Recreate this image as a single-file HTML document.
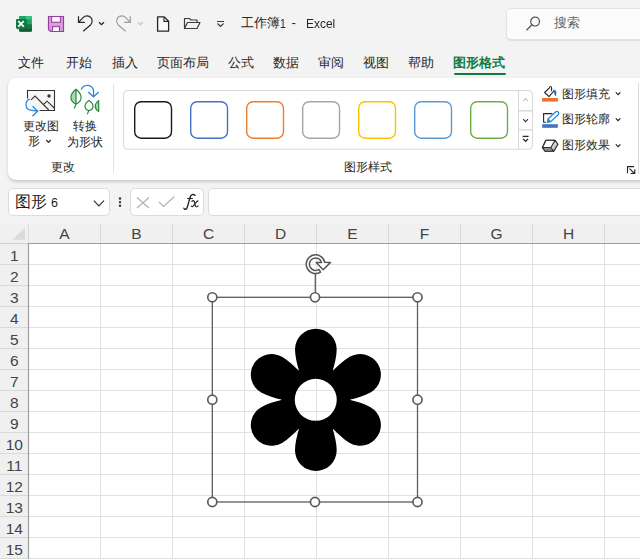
<!DOCTYPE html>
<html><head><meta charset="utf-8">
<style>
*{margin:0;padding:0;box-sizing:border-box}
html,body{width:640px;height:559px;overflow:hidden;background:#f3f3f3;font-family:"Liberation Sans",sans-serif;color:#262626;position:relative}
.a{position:absolute;white-space:nowrap;line-height:1}
.tab{font-size:13px;top:56px;color:#262626}
.card{position:absolute;left:8px;top:77.5px;width:650px;height:102.5px;background:#fff;border-radius:8px;box-shadow:0 1.5px 3px rgba(0,0,0,.16)}
.box{position:absolute;background:#fff;border:1px solid #dcdcdc;border-radius:5px}
.sw{position:absolute;top:101px;width:38px;height:37.5px;border:1.5px solid;border-radius:7px}
.rh{position:absolute;left:0;width:28.5px;text-align:center;font-size:15.5px;color:#444}
.ch{position:absolute;top:226px;width:72px;text-align:center;font-size:15.5px;color:#444}
</style></head><body>

<!-- title bar icons -->
<svg class="a" style="left:0;top:0" width="640" height="46" viewBox="0 0 640 46">
  <!-- excel icon -->
  <rect x="19.2" y="16" width="12.7" height="15.7" rx="1" fill="#21a366"/>
  <rect x="19.2" y="16" width="12.7" height="3.4" rx="1" fill="#21a366"/>
  <rect x="25.8" y="16" width="6.1" height="3.4" fill="#33c481"/>
  <rect x="19.2" y="24.3" width="12.7" height="4.1" fill="#107c41"/>
  <path d="M19.2 28.3 H31.9 V30.7 Q31.9 31.7 30.9 31.7 H20.2 Q19.2 31.7 19.2 30.7 Z" fill="#185c37"/>
  <rect x="17" y="20" width="10.2" height="9.3" fill="#0a5a2c" opacity=".5"/>
  <rect x="16" y="19" width="10.7" height="9.85" rx="1" fill="#107c41"/>
  <path d="M18.3 21.1 L23.7 26.6 M23.7 21.1 L18.3 26.6" stroke="#fff" stroke-width="1.7"/>
  <!-- save icon -->
  <path d="M48.5 16.5 H63.5 V31.5 H50.5 L48.5 29.5 Z" fill="#d89ddb" stroke="#9b3ea2" stroke-width="1.2"/>
  <rect x="51.6" y="16.5" width="8.8" height="5.7" fill="#fff" stroke="#9b3ea2" stroke-width="1.1"/>
  <rect x="52.5" y="26.6" width="7" height="4.9" fill="#fff" stroke="#9b3ea2" stroke-width="1.1"/>
  <!-- undo -->
  <path d="M78.5 16.3 V22.3 H84.8 M78.5 22.3 L83.3 17.4 C85.3 15.4 89 15.4 91 17.6 C92.7 19.6 92.5 23 90.5 25 L83.2 31.3" fill="none" stroke="#262626" stroke-width="1.2"/>
  <path d="M99 22.3 L101.5 24.7 L104 22.3" fill="none" stroke="#262626" stroke-width="1.3"/>
  <!-- redo -->
  <path d="M130.3 16.3 V22.3 H124 M130.3 22.3 L125.5 17.4 C123.5 15.4 119.8 15.4 117.8 17.6 C116.1 19.6 116.3 23 118.3 25 L125.6 31.3" fill="none" stroke="#9c9c9c" stroke-width="1.2"/>
  <path d="M137.8 22.3 L140.4 24.7 L143 22.3" fill="none" stroke="#c4c4c4" stroke-width="1.2"/>
  <!-- new doc -->
  <path d="M157.6 16.9 H164.2 L168.6 21.3 V31.2 H157.6 Z" fill="#fafafa" stroke="#262626" stroke-width="1.3" stroke-linejoin="round"/><path d="M164 17 V21.4 H168.5" fill="none" stroke="#262626" stroke-width="1.1"/>
  <!-- open folder -->
  <path d="M184.5 28.5 V18.5 H189.5 L191 20 H197 V22.5 M184.5 28.5 L187.5 22.5 H200 L197 28.5 Z" fill="none" stroke="#3b3b3b" stroke-width="1.2" stroke-linejoin="round"/>
  <!-- customize -->
  <path d="M217 21.5 H224 M217.5 23.5 L220.5 26.5 L223.5 23.5" fill="none" stroke="#3b3b3b" stroke-width="1.2"/>
</svg>
<div class="a" style="left:241px;top:17px;font-size:12.5px;color:#262626">工作簿</div>
<div class="a" style="left:279.5px;top:17px;font-size:13px;color:#262626;transform:scaleX(.8);transform-origin:0 0">1</div>
<div class="a" style="left:291.5px;top:16.3px;font-size:13px;color:#262626">-</div>
<div class="a" style="left:305.5px;top:16.8px;font-size:13px;color:#262626;transform:scaleX(.92);transform-origin:0 0">Excel</div>

<!-- search box -->
<div class="box" style="left:505.5px;top:8px;width:150px;height:31.5px;background:#fbfbfb;border-color:#e3e3e3;box-shadow:0 1px 1px rgba(0,0,0,.08)"></div>
<svg class="a" style="left:524px;top:15px" width="18" height="18" viewBox="0 0 18 18">
  <circle cx="11.1" cy="6.6" r="4.4" fill="none" stroke="#555" stroke-width="1.2"/>
  <path d="M7.9 9.8 L2.5 15.2" stroke="#555" stroke-width="1.25"/>
</svg>
<div class="a" style="left:554px;top:16px;font-size:13px;color:#616161">搜索</div>

<!-- tabs -->
<div class="a tab" style="left:18px">文件</div>
<div class="a tab" style="left:66px">开始</div>
<div class="a tab" style="left:111.5px">插入</div>
<div class="a tab" style="left:157px">页面布局</div>
<div class="a tab" style="left:228px">公式</div>
<div class="a tab" style="left:273px">数据</div>
<div class="a tab" style="left:317.5px">审阅</div>
<div class="a tab" style="left:362.5px">视图</div>
<div class="a tab" style="left:408px">帮助</div>
<div class="a tab" style="left:453px;color:#107c41;font-weight:bold">图形格式</div>
<div class="a" style="left:453.5px;top:72.8px;width:52px;height:2.3px;background:#107c41;border-radius:1px"></div>

<!-- ribbon card -->
<div class="card"></div>


<!-- ribbon contents -->
<svg class="a" style="left:0;top:78px" width="640" height="102" viewBox="0 78 640 102">
  <!-- change shape icon -->
  <path d="M27.5 98.5 V90.5 H54.5 V110.5 H39.5" fill="#f6f6f6" stroke="#333" stroke-width="1.1"/>
  <path d="M30 99.5 V110.5 H39.5" fill="#f6f6f6" stroke="none"/>
  <circle cx="49" cy="96" r="1.7" fill="#333"/>
  <path d="M31 99.8 L35 96 L48.8 110 M43.5 104.5 L47 101.2 L54.3 108" fill="none" stroke="#333" stroke-width="1.1"/>
  <path d="M29.7 99.2 C25 101 24.3 108.5 30.5 110.2 C33 111 35.5 111 37.5 111" fill="none" stroke="#2b88d8" stroke-width="1.3"/>
  <path d="M32.5 106.2 L37.7 111 L32.5 116.3" fill="none" stroke="#2b88d8" stroke-width="1.3"/>
  <!-- convert to shape icon -->
  <path d="M76 89.2 C72.5 92 70.8 95 70.9 97.5 C71 100.5 73.5 103 76 104.2 Z" fill="#a8dcb0"/>
  <path d="M76 89.2 C72.5 92 70.8 95 70.9 97.5 C71 100.5 73.5 103 76 104.2 C78.5 103 81 100.5 81.1 97.5 C81.2 95 79.5 92 76 89.2 Z M76 89.5 V104.5 L74.2 108.6" fill="none" stroke="#238636" stroke-width="1.15" stroke-linejoin="round"/>
  <path d="M81.3 89.6 C83 84.5 91 83.5 93.3 89.5 C93.8 91.5 93.7 94 93.5 96.5 M88.2 92 L93.5 96.8 L98.7 92" fill="none" stroke="#2b88d8" stroke-width="1.3"/>
  <path d="M89 100.5 C86.3 102.3 85 104.5 85 106 C85 108.3 86.8 110.3 89 110.6 C91.2 110.3 93 108.3 93 106 C93 104.5 91.7 102.3 89 100.5 Z M88.7 110.6 L87.3 114.4" fill="none" stroke="#238636" stroke-width="1.15" stroke-linejoin="round"/>
  <path d="M98.7 100.6 C96.3 102.5 95.2 104.5 95.2 106.2 C95.2 108 96.5 110 98.7 111.6 Z" fill="#a8dcb0" stroke="#238636" stroke-width="1.15" stroke-linejoin="round"/>
  <!-- small chevron under 形 -->
  <path d="M46.3 140 L48.5 142.3 L50.8 140" fill="none" stroke="#262626" stroke-width="1.2"/>
  <!-- separator -->
  <line x1="113.5" y1="84" x2="113.5" y2="173" stroke="#e1e1e1" stroke-width="1"/>
  <!-- gallery box -->
  <rect x="123.5" y="90.5" width="409" height="58.7" rx="3.5" fill="#fff" stroke="#d8d8d8" stroke-width="1"/>
  <line x1="518.5" y1="91" x2="518.5" y2="149" stroke="#d8d8d8" stroke-width="1"/>
  <line x1="519" y1="110.8" x2="532" y2="110.8" stroke="#d8d8d8" stroke-width="1.5"/>
  <line x1="519" y1="129.9" x2="532" y2="129.9" stroke="#d8d8d8" stroke-width="1.3"/>
  <path d="M523.2 100.9 L525.6 98.5 L528 100.9" fill="none" stroke="#c0c0c0" stroke-width="1.1"/>
  <path d="M523.2 119.2 L525.6 121.6 L528 119.2" fill="none" stroke="#333" stroke-width="1.1"/>
  <path d="M522.6 136.3 H528.6 M523.1 138.9 L525.6 141.3 L528.1 138.9" fill="none" stroke="#262626" stroke-width="1.2"/>
  <!-- swatches -->
  <rect x="134.7" y="101.7" width="36.8" height="36.5" rx="6.5" fill="none" stroke="#1a1a1a" stroke-width="1.4"/>
  <rect x="190.7" y="101.7" width="36.8" height="36.5" rx="6.5" fill="none" stroke="#4472c4" stroke-width="1.4"/>
  <rect x="246.7" y="101.7" width="36.8" height="36.5" rx="6.5" fill="none" stroke="#ed7d31" stroke-width="1.4"/>
  <rect x="302.7" y="101.7" width="36.8" height="36.5" rx="6.5" fill="none" stroke="#a5a5a5" stroke-width="1.4"/>
  <rect x="358.7" y="101.7" width="36.8" height="36.5" rx="6.5" fill="none" stroke="#ffc000" stroke-width="1.4"/>
  <rect x="414.7" y="101.7" width="36.8" height="36.5" rx="6.5" fill="none" stroke="#5b9bd5" stroke-width="1.4"/>
  <rect x="470.7" y="101.7" width="36.8" height="36.5" rx="6.5" fill="none" stroke="#70ad47" stroke-width="1.4"/>
  <!-- fill icon -->
  <path d="M553.9 91 L549 96.6 L544.6 92.5 L549.4 87.8" fill="#fafafa" stroke="#262626" stroke-width="1.1" stroke-linejoin="round"/>
  <path d="M549.4 88.3 C549.5 85.9 551.6 85.9 551.6 88.3 V91.3" fill="none" stroke="#262626" stroke-width="1.1"/>
  <path d="M553.7 90.3 C555 89.8 556 90.8 555.9 92.5 L555.6 95.8 C554.8 94 554.2 92.5 553.7 90.3 Z" fill="#1a6fc9" stroke="#1a6fc9" stroke-width="0.9" stroke-linejoin="round"/>
  <rect x="542.1" y="98" width="15.8" height="3.6" fill="#ed7128"/>
  <!-- outline icon -->
  <path d="M552.3 113.6 H543.6 V122.3 H545.9" fill="none" stroke="#262626" stroke-width="1.1"/>
  <path d="M547.3 122.2 L550.8 121.6 L558.2 114.8 A1.9 1.9 0 0 0 555.6 112 L548.2 118.8 Z" fill="#fff" stroke="#1f86d6" stroke-width="1.2" stroke-linejoin="round"/>
  <path d="M547.3 122.2 L550.8 121.6 L548.2 118.8 Z" fill="#1f86d6" stroke="#1f86d6" stroke-width="0.8" stroke-linejoin="round"/>
  <rect x="542.2" y="124.2" width="15.6" height="3.6" fill="#4472c4"/>
  <!-- effects icon -->
  <path d="M545.9 140.3 H555 L557.8 144.3 L553.7 151.3 H545.1 L542.4 147.6 Z" fill="#fff" stroke="#333" stroke-width="1.1" stroke-linejoin="round"/>
  <path d="M542.6 147.5 H550.9 L553.7 151.3 H545.1 Z" fill="#8a8a8a"/>
  <path d="M550.9 147.5 L555 140.3 L557.8 144.3 L553.7 151.3 Z" fill="#d0d0d0"/>
  <path d="M545.9 140.3 H555 L557.8 144.3 L553.7 151.3 H545.1 L542.4 147.6 Z M542.4 147.5 H550.9 L555 140.3 M550.9 147.5 L553.7 151.3" fill="none" stroke="#333" stroke-width="1.1" stroke-linejoin="round"/>
  <!-- chevrons -->
  <path d="M615.8 92.3 L618.1 94.6 L620.4 92.3" fill="none" stroke="#262626" stroke-width="1.2"/>
  <path d="M615.8 118.3 L618.1 120.6 L620.4 118.3" fill="none" stroke="#262626" stroke-width="1.2"/>
  <path d="M615.8 144.3 L618.1 146.6 L620.4 144.3" fill="none" stroke="#262626" stroke-width="1.2"/>
  <!-- dialog launcher -->
  <path d="M627.5 173.3 V166.6 H634 M629.5 168.7 L634.5 173.5 M630.6 173.5 H634.8 V169.3" fill="none" stroke="#262626" stroke-width="1.1"/>
  <line x1="638.5" y1="83" x2="638.5" y2="173.6" stroke="#dcdcdc" stroke-width="1"/>
</svg>
<div class="a" style="left:23px;top:120px;font-size:12px">更改图</div>
<div class="a" style="left:27.5px;top:135px;font-size:12px">形</div>
<div class="a" style="left:73px;top:120px;font-size:12px">转换</div>
<div class="a" style="left:67px;top:135.5px;font-size:12px">为形状</div>
<div class="a" style="left:50.5px;top:160.5px;font-size:12px">更改</div>
<div class="a" style="left:343.5px;top:160.5px;font-size:12px">图形样式</div>
<div class="a" style="left:561.5px;top:87.5px;font-size:12px">图形填充</div>
<div class="a" style="left:561.5px;top:113.3px;font-size:12px">图形轮廓</div>
<div class="a" style="left:561.5px;top:138.7px;font-size:12px">图形效果</div>

<!-- formula bar -->
<div class="box" style="left:8px;top:188px;width:101.5px;height:27.5px"></div>
<div class="a" style="left:15px;top:194px;font-size:16px;color:#1f1f1f">图形</div>
<div class="a" style="left:51px;top:196.5px;font-size:12.5px;color:#1f1f1f">6</div>
<svg class="a" style="left:90px;top:196px" width="16" height="14" viewBox="0 0 16 14"><path d="M3.8 4.6 L8.9 9.8 L14 4.6" fill="none" stroke="#333" stroke-width="1.2"/></svg>
<svg class="a" style="left:116px;top:194px" width="8" height="16"><circle cx="4" cy="4.5" r="1.2" fill="#333"/><circle cx="4" cy="8.1" r="1.2" fill="#333"/><circle cx="4" cy="11.7" r="1.2" fill="#333"/></svg>
<div class="box" style="left:130px;top:188px;width:73.5px;height:27.5px"></div>
<svg class="a" style="left:130px;top:188px" width="74" height="28" viewBox="130 188 74 28">
  <path d="M137 197.5 L149 208 M149 197.5 L137 208" stroke="#b0b0b0" stroke-width="1.1" fill="none"/>
  <path d="M159 202 L163.5 206.5 L174.5 196.5" stroke="#b0b0b0" stroke-width="1.1" fill="none"/>
</svg>
<svg class="a" style="left:180px;top:190px" width="24" height="24" viewBox="180 190 24 24">
  <path d="M183.9 208.2 C184.6 209.9 186.6 209.6 187.3 207.3 L190.2 197 C190.9 194.5 193.2 193.7 195 195.3" fill="none" stroke="#262626" stroke-width="1.35" stroke-linecap="round"/>
  <path d="M187.2 198.5 H192.8" fill="none" stroke="#262626" stroke-width="1.1"/>
  <path d="M191.9 201.3 C193.4 200 194.3 200.7 194.6 202.4 L195.2 205.4 C195.5 207.2 196.8 207.1 197.9 205.9 M197.9 200.9 C196.6 201.3 195.3 203.1 193.9 205.2 C193.1 206.5 192.1 207.1 191.3 206.2" fill="none" stroke="#262626" stroke-width="1.2" stroke-linecap="round"/>
</svg>
<div class="box" style="left:208px;top:188px;width:440px;height:27.5px"></div>

<div class="a" style="left:0;top:223px;width:640px;height:336px;background:#fff"></div>
<div class="a" style="left:0;top:223px;width:640px;height:20.5px;background:#f0f0f0"></div>
<div class="a" style="left:0;top:223px;width:28.5px;height:336px;background:#f0f0f0"></div>
<svg class="a" style="left:0;top:0" width="640" height="559" viewBox="0 0 640 559">
<path d="M12.5 239.7 L25 227.5 L25 239.7 Z" fill="#dadada"/>
<line x1="28.5" y1="224" x2="28.5" y2="243" stroke="#dcdcdc" stroke-width="1"/>
<line x1="100.5" y1="224.2" x2="100.5" y2="243" stroke="#dadada" stroke-width="1"/>
<line x1="100.5" y1="243.5" x2="100.5" y2="559" stroke="#e1e1e1" stroke-width="1"/>
<line x1="172.5" y1="224.2" x2="172.5" y2="243" stroke="#dadada" stroke-width="1"/>
<line x1="172.5" y1="243.5" x2="172.5" y2="559" stroke="#e1e1e1" stroke-width="1"/>
<line x1="244.5" y1="224.2" x2="244.5" y2="243" stroke="#dadada" stroke-width="1"/>
<line x1="244.5" y1="243.5" x2="244.5" y2="559" stroke="#e1e1e1" stroke-width="1"/>
<line x1="316.5" y1="224.2" x2="316.5" y2="243" stroke="#dadada" stroke-width="1"/>
<line x1="316.5" y1="243.5" x2="316.5" y2="559" stroke="#e1e1e1" stroke-width="1"/>
<line x1="388.5" y1="224.2" x2="388.5" y2="243" stroke="#dadada" stroke-width="1"/>
<line x1="388.5" y1="243.5" x2="388.5" y2="559" stroke="#e1e1e1" stroke-width="1"/>
<line x1="460.5" y1="224.2" x2="460.5" y2="243" stroke="#dadada" stroke-width="1"/>
<line x1="460.5" y1="243.5" x2="460.5" y2="559" stroke="#e1e1e1" stroke-width="1"/>
<line x1="532.5" y1="224.2" x2="532.5" y2="243" stroke="#dadada" stroke-width="1"/>
<line x1="532.5" y1="243.5" x2="532.5" y2="559" stroke="#e1e1e1" stroke-width="1"/>
<line x1="604.5" y1="224.2" x2="604.5" y2="243" stroke="#dadada" stroke-width="1"/>
<line x1="604.5" y1="243.5" x2="604.5" y2="559" stroke="#e1e1e1" stroke-width="1"/>
<line x1="0" y1="264.5" x2="28" y2="264.5" stroke="#dadada" stroke-width="1"/>
<line x1="28.5" y1="264.5" x2="640" y2="264.5" stroke="#e1e1e1" stroke-width="1"/>
<line x1="0" y1="285.5" x2="28" y2="285.5" stroke="#dadada" stroke-width="1"/>
<line x1="28.5" y1="285.5" x2="640" y2="285.5" stroke="#e1e1e1" stroke-width="1"/>
<line x1="0" y1="306.5" x2="28" y2="306.5" stroke="#dadada" stroke-width="1"/>
<line x1="28.5" y1="306.5" x2="640" y2="306.5" stroke="#e1e1e1" stroke-width="1"/>
<line x1="0" y1="327.5" x2="28" y2="327.5" stroke="#dadada" stroke-width="1"/>
<line x1="28.5" y1="327.5" x2="640" y2="327.5" stroke="#e1e1e1" stroke-width="1"/>
<line x1="0" y1="348.5" x2="28" y2="348.5" stroke="#dadada" stroke-width="1"/>
<line x1="28.5" y1="348.5" x2="640" y2="348.5" stroke="#e1e1e1" stroke-width="1"/>
<line x1="0" y1="369.5" x2="28" y2="369.5" stroke="#dadada" stroke-width="1"/>
<line x1="28.5" y1="369.5" x2="640" y2="369.5" stroke="#e1e1e1" stroke-width="1"/>
<line x1="0" y1="390.5" x2="28" y2="390.5" stroke="#dadada" stroke-width="1"/>
<line x1="28.5" y1="390.5" x2="640" y2="390.5" stroke="#e1e1e1" stroke-width="1"/>
<line x1="0" y1="411.5" x2="28" y2="411.5" stroke="#dadada" stroke-width="1"/>
<line x1="28.5" y1="411.5" x2="640" y2="411.5" stroke="#e1e1e1" stroke-width="1"/>
<line x1="0" y1="432.5" x2="28" y2="432.5" stroke="#dadada" stroke-width="1"/>
<line x1="28.5" y1="432.5" x2="640" y2="432.5" stroke="#e1e1e1" stroke-width="1"/>
<line x1="0" y1="453.5" x2="28" y2="453.5" stroke="#dadada" stroke-width="1"/>
<line x1="28.5" y1="453.5" x2="640" y2="453.5" stroke="#e1e1e1" stroke-width="1"/>
<line x1="0" y1="474.5" x2="28" y2="474.5" stroke="#dadada" stroke-width="1"/>
<line x1="28.5" y1="474.5" x2="640" y2="474.5" stroke="#e1e1e1" stroke-width="1"/>
<line x1="0" y1="495.5" x2="28" y2="495.5" stroke="#dadada" stroke-width="1"/>
<line x1="28.5" y1="495.5" x2="640" y2="495.5" stroke="#e1e1e1" stroke-width="1"/>
<line x1="0" y1="516.5" x2="28" y2="516.5" stroke="#dadada" stroke-width="1"/>
<line x1="28.5" y1="516.5" x2="640" y2="516.5" stroke="#e1e1e1" stroke-width="1"/>
<line x1="0" y1="537.5" x2="28" y2="537.5" stroke="#dadada" stroke-width="1"/>
<line x1="28.5" y1="537.5" x2="640" y2="537.5" stroke="#e1e1e1" stroke-width="1"/>
<line x1="0" y1="558.5" x2="28" y2="558.5" stroke="#dadada" stroke-width="1"/>
<line x1="28.5" y1="558.5" x2="640" y2="558.5" stroke="#e1e1e1" stroke-width="1"/>
<line x1="0" y1="243.5" x2="28" y2="243.5" stroke="#d0d0d0" stroke-width="1"/>
<line x1="28" y1="243.5" x2="640" y2="243.5" stroke="#9e9e9e" stroke-width="1.2"/>
<line x1="28.5" y1="243" x2="28.5" y2="559" stroke="#9e9e9e" stroke-width="1.2"/>
</svg>
<div class="ch a" style="left:28.5px">A</div>
<div class="ch a" style="left:100.5px">B</div>
<div class="ch a" style="left:172.5px">C</div>
<div class="ch a" style="left:244.5px">D</div>
<div class="ch a" style="left:316.5px">E</div>
<div class="ch a" style="left:388.5px">F</div>
<div class="ch a" style="left:460.5px">G</div>
<div class="ch a" style="left:532.5px">H</div>
<div class="rh a" style="top:247.5px">1</div>
<div class="rh a" style="top:268.5px">2</div>
<div class="rh a" style="top:289.5px">3</div>
<div class="rh a" style="top:310.5px">4</div>
<div class="rh a" style="top:331.5px">5</div>
<div class="rh a" style="top:352.5px">6</div>
<div class="rh a" style="top:373.5px">7</div>
<div class="rh a" style="top:394.5px">8</div>
<div class="rh a" style="top:415.5px">9</div>
<div class="rh a" style="top:436.5px">10</div>
<div class="rh a" style="top:457.5px">11</div>
<div class="rh a" style="top:478.5px">12</div>
<div class="rh a" style="top:499.5px">13</div>
<div class="rh a" style="top:520.5px">14</div>
<div class="rh a" style="top:541.5px">15</div>

<svg class="a" style="left:0;top:0" width="640" height="559" viewBox="0 0 640 559">
<defs><mask id="hole"><rect x="0" y="0" width="640" height="559" fill="#fff"/><circle cx="315.75" cy="399.8" r="21" fill="#000"/></mask></defs>
<g mask="url(#hole)" fill="#000"><g transform="translate(315.85 399.85) scale(1.012 1) translate(-315.75 -399.8)">
<path d="M315.75 399.80 L299.15 371.05 C297.15 363.80 295.15 356.30 295.15 349.30 A20.6 20.6 0 0 1 336.35 349.30 C336.35 356.30 334.35 363.80 332.35 371.05 Z M315.75 399.80 L332.35 371.05 C337.63 365.69 343.12 360.21 349.18 356.71 A20.6 20.6 0 0 1 369.78 392.39 C363.72 395.89 356.23 397.91 348.95 399.80 Z M315.75 399.80 L348.95 399.80 C356.23 401.69 363.72 403.71 369.78 407.21 A20.6 20.6 0 0 1 349.18 442.89 C343.12 439.39 337.63 433.91 332.35 428.55 Z M315.75 399.80 L332.35 428.55 C334.35 435.80 336.35 443.30 336.35 450.30 A20.6 20.6 0 0 1 295.15 450.30 C295.15 443.30 297.15 435.80 299.15 428.55 Z M315.75 399.80 L299.15 428.55 C293.87 433.91 288.38 439.39 282.32 442.89 A20.6 20.6 0 0 1 261.72 407.21 C267.78 403.71 275.27 401.69 282.55 399.80 Z M315.75 399.80 L282.55 399.80 C275.27 397.91 267.78 395.89 261.72 392.39 A20.6 20.6 0 0 1 282.32 356.71 C288.38 360.21 293.87 365.69 299.15 371.05 Z"/>
<circle cx="315.75" cy="399.8" r="34"/>
</g></g>
<rect x="212.3" y="297.3" width="205.2" height="204.7" fill="none" stroke="#5c5c5c" stroke-width="1.3"/>
<line x1="315.3" y1="273.5" x2="315.3" y2="297" stroke="#5c5c5c" stroke-width="1.3"/>
<circle cx="212.3" cy="297.3" r="4.55" fill="#fff" stroke="#5c5c5c" stroke-width="1.7"/>
<circle cx="315" cy="297.3" r="4.55" fill="#fff" stroke="#5c5c5c" stroke-width="1.7"/>
<circle cx="417.5" cy="297.3" r="4.55" fill="#fff" stroke="#5c5c5c" stroke-width="1.7"/>
<circle cx="212.3" cy="399.7" r="4.55" fill="#fff" stroke="#5c5c5c" stroke-width="1.7"/>
<circle cx="417.5" cy="399.7" r="4.55" fill="#fff" stroke="#5c5c5c" stroke-width="1.7"/>
<circle cx="212.3" cy="502" r="4.55" fill="#fff" stroke="#5c5c5c" stroke-width="1.7"/>
<circle cx="315" cy="502" r="4.55" fill="#fff" stroke="#5c5c5c" stroke-width="1.7"/>
<circle cx="417.5" cy="502" r="4.55" fill="#fff" stroke="#5c5c5c" stroke-width="1.7"/>
<path d="M320.55 272.13 A9.35 9.35 0 1 1 324.75 262.26 L330.5 262.4 L323.2 269.7 L316.2 262.5 L321.59 262.60 A6.2 6.2 0 1 0 318.89 269.46 Z" fill="#fff" stroke="#555" stroke-width="1.5" stroke-linejoin="round"/>
</svg>
</body></html>
